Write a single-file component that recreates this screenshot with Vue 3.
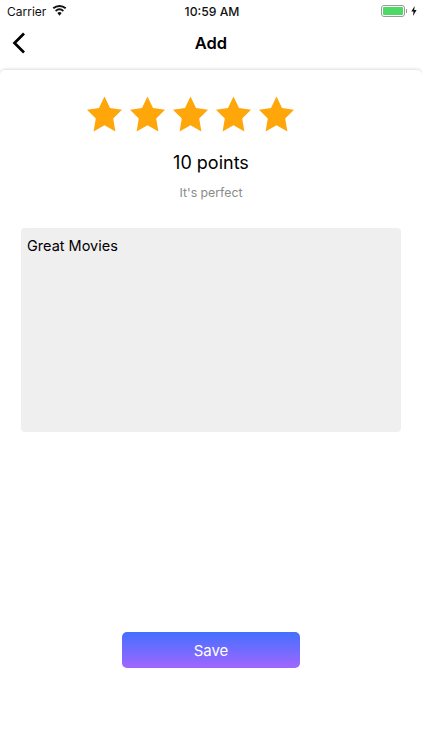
<script setup>
const stars = [1, 2, 3, 4, 5]
</script>

<template>
  <div class="page">
    <div class="status">
      <div class="status-left">
        <span>Carrier</span>
        <svg class="wifi" width="15" height="11" viewBox="0 0 16 12">
          <path d="M8 11.6 L5.6 8.7 A3.8 3.8 0 0 1 10.4 8.7 Z" fill="#111" />
          <path d="M4.4 7.3 L3.1 5.7 A7.7 7.7 0 0 1 12.9 5.7 L11.6 7.3 A5.6 5.6 0 0 0 4.4 7.3 Z" fill="#111" />
          <path d="M1.9 4.4 L0.5 2.8 A11.6 11.6 0 0 1 15.5 2.8 L14.1 4.4 A9.5 9.5 0 0 0 1.9 4.4 Z" fill="#111" />
        </svg>
      </div>
      <div class="clock">10:59 AM</div>
      <div class="status-right">
        <div class="battery"><div class="battery-fill"></div></div>
        <div class="battery-cap"></div>
        <svg class="bolt" width="6" height="10" viewBox="0 0 6 10">
          <path d="M3.7 0 L0.3 5.6 H2.5 L2 10 L5.6 4.1 H3.2 Z" fill="#111" />
        </svg>
      </div>
    </div>

    <header class="nav">
      <svg class="back" width="14" height="22" viewBox="0 0 14 22">
        <path d="M12 1.5 L2.5 11 L12 20.5" fill="none" stroke="#000" stroke-width="2.7" />
      </svg>
      <h1 class="title">Add</h1>
    </header>

    <main class="card">
      <div class="stars">
        <svg v-for="s in stars" :key="s" class="star" width="35" height="36" viewBox="0 0 35 36">
          <path d="M17.5 0.5 L23 12 L35 13.8 L26.2 22.6 L28.4 35.5 L17.5 29.2 L6.6 35.5 L8.8 22.6 L0 13.8 L12 12 Z" fill="#ffa60a" />
        </svg>
      </div>
      <div class="points">10 points</div>
      <div class="hint">It's perfect</div>
      <div class="box">Great Movies</div>
      <button class="save">Save</button>
    </main>
  </div>
</template>

<style scoped>
.page {
  width: 422px;
  height: 750px;
  background: #fff;
  overflow: hidden;
  font-family: Inter, "Liberation Sans", sans-serif;
  color: #000;
  display: flex;
  flex-direction: column;
}
.status {
  height: 22px;
  display: grid;
  grid-template-columns: 1fr auto 1fr;
  align-items: center;
  padding: 0 5px 0 7px;
  font-size: 12px;
  color: #111;
}
.status-left {
  display: flex;
  align-items: center;
  gap: 6px;
}
.wifi {
  margin-top: -1px;
}
.clock {
  font-weight: 500;
  font-size: 12.2px;
}
.status-right {
  display: flex;
  align-items: center;
  justify-content: flex-end;
}
.battery {
  width: 24px;
  height: 12px;
  box-sizing: border-box;
  border: 1px solid #9a9a9a;
  border-radius: 3px;
  padding: 1px;
}
.battery-fill {
  height: 100%;
  background: #4cd964;
  border-radius: 1px;
}
.battery-cap {
  width: 1px;
  height: 4px;
  background: #9a9a9a;
  margin-left: 1px;
}
.bolt {
  margin-left: 4px;
}
.nav {
  height: 48px;
  display: flex;
  align-items: center;
  justify-content: center;
  position: relative;
  padding-bottom: 6px;
  box-sizing: border-box;
}
.back {
  position: absolute;
  left: 12px;
  top: 10px;
}
.title {
  margin: 0;
  font-size: 16.5px;
  font-weight: 600;
}
.card {
  flex: 1;
  border-radius: 5px 5px 0 0;
  box-shadow: 0 -1px 3px rgba(0, 0, 0, 0.14);
  display: flex;
  flex-direction: column;
  align-items: center;
  padding-top: 26px;
}
.stars {
  display: flex;
  gap: 8px;
  align-self: flex-start;
  margin-left: 87px;
}
.star {
  display: block;
}
.points {
  margin-top: 19px;
  font-size: 18px;
  line-height: 24px;
}
.hint {
  margin-top: 10px;
  font-size: 12.3px;
  line-height: 16px;
  color: #8a8a8a;
}
.box {
  box-sizing: border-box;
  width: 380px;
  height: 204px;
  margin-top: 27px;
  padding: 8px 6px;
  background: #efefef;
  border-radius: 4px;
  font-size: 14.5px;
  line-height: 20px;
}
.save {
  width: 178px;
  height: 36px;
  margin-top: 200px;
  border: 0;
  border-radius: 5px;
  background: linear-gradient(180deg, #4370ff, #a066ff);
  color: #fff;
  font-family: inherit;
  font-size: 15px;
}
</style>
